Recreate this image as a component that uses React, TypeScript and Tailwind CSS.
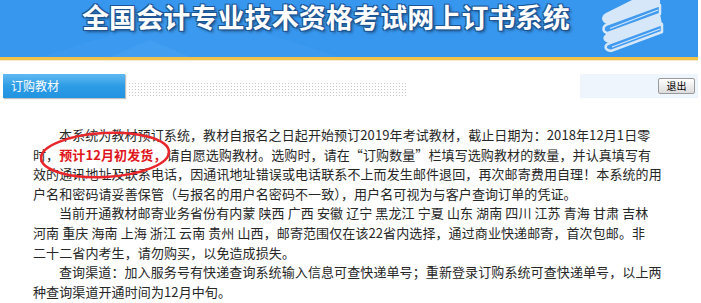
import React from "react";

const F = { fontFamily: '"Noto Sans CJK SC", "Noto Sans", sans-serif' };

function Books() {
  return (
    <svg className="absolute left-[590px] top-0" width="80" height="52" viewBox="0 0 80 52" fill="none">
      <path d="M16,13 C10,16 11,23 18,24 L70,5 L70,-3 L48,-3 Z" fill="#d6e7f9" />
      <path d="M18,24 C12,26 12,32 18,33 L70,14 L70,5 Z" fill="#3f9af0" stroke="#d6e7f9" strokeWidth="2.5" strokeLinejoin="round" />
      <path d="M20,28.5 L68,10" stroke="#d6e7f9" strokeWidth="1.2" />
      <path d="M18,33 C11,36 12,42 20,43 L72,24 L70,14 Z" fill="#d6e7f9" />
      <path d="M20,43 C14,45 14,50 21,51 L72,32 L72,24 Z" fill="#3f9af0" stroke="#d6e7f9" strokeWidth="2.5" strokeLinejoin="round" />
      <path d="M22,47 L70,29" stroke="#d6e7f9" strokeWidth="1.2" />
    </svg>
  );
}

export default function App() {
  return (
    <div className="relative w-[701px] h-[303px] overflow-hidden bg-white" style={F}>
      <div className="relative h-[57px] w-[698px] bg-[#3796ee]">
        <svg className="absolute left-0 top-0" width="698" height="57" viewBox="0 0 698 57">
          <polygon points="110,57 190,57 150,40" fill="#4aa3f2" opacity="0.5" />
          <polygon points="40,57 340,57 190,10" fill="#45a0f1" opacity="0.35" />
        </svg>
        <Books />
        <div className="relative pl-[82px] pt-[2px] text-[27px] leading-[30px] font-bold text-white tracking-[0.1px] [text-shadow:1px_1px_0_#1d5494,-1px_-1px_0_#1d5494,1px_-1px_0_#1d5494,-1px_1px_0_#1d5494,2px_2px_3px_rgba(0,0,0,0.45)]">
          全国会计专业技术资格考试网上订书系统
        </div>
      </div>
      <div className="h-[3px] w-[698px] bg-[#f1c24a]" />
      <div className="h-[1px] w-[698px] bg-[#f6ecd0]" />

      <div className="mt-[13px] flex h-[24px] w-[698px] items-stretch">
        <div className="ml-[3px] w-[122px] bg-gradient-to-b from-[#5fbaf2] via-[#2c9ce6] to-[#2293e0] text-white text-[12px] leading-[24px] pl-[8px] shadow-[1px_1px_1px_rgba(0,0,0,0.25)]">
          订购教材
        </div>
        <div className="ml-[3px] mt-[8px] h-[14px] w-[279px] bg-[radial-gradient(circle,#c9c9c9_0.7px,transparent_0.9px)] bg-[length:3px_3px]" />
        <div className="flex-1" />
        <div className="w-[118px] bg-[#eef5fc] flex items-center justify-end pr-[3px]">
          <div className="h-[16px] w-[37px] rounded-[2px] border border-[#9a9a9a] bg-gradient-to-b from-white to-[#dcdcdc] text-[10px] leading-[14px] text-black text-center">
            退出
          </div>
        </div>
      </div>

      <div className="relative mt-[27px] pl-[33px] text-[13px] leading-[19.6px] text-[#262626] tracking-[0.1px] whitespace-nowrap">
        <p className="indent-[26px]">
          本系统为教材预订系统，教材自报名之日起开始预订2019年考试教材，截止日期为：2018年12月1日零
          <br />
          时，<span className="font-bold text-[#e0141b]">预计12月初发货，</span>请自愿选购教材。选购时，请在“订购数量”栏填写选购教材的数量，并认真填写有
          <br />
          效的通讯地址及联系电话，因通讯地址错误或电话联系不上而发生邮件退回，再次邮寄费用自理！本系统的用
          <br />
          户名和密码请妥善保管（与报名的用户名密码不一致），用户名可视为与客户查询订单的凭证。
        </p>
        <p className="indent-[26px]">
          当前开通教材邮寄业务省份有内蒙 陕西 广西 安徽 辽宁 黑龙江 宁夏 山东 湖南 四川 江苏 青海 甘肃 吉林
          <br />
          河南 重庆 海南 上海 浙江 云南 贵州 山西，邮寄范围仅在该22省内选择，通过商业快递邮寄，首次包邮。非
          <br />
          二十二省内考生，请勿购买，以免造成损失。
        </p>
        <p className="indent-[26px]">
          查询渠道：加入服务号有快递查询系统输入信息可查快递单号；重新登录订购系统可查快递单号，以上两
          <br />
          种查询渠道开通时间为12月中旬。
        </p>
      </div>

      <svg className="absolute left-[36px] top-[128px]" width="144" height="54" viewBox="0 0 144 54" fill="none">
        <ellipse cx="69" cy="27" rx="64" ry="22" transform="rotate(-3 69 27)" stroke="#e8262c" strokeWidth="2.6" />
      </svg>
    </div>
  );
}
